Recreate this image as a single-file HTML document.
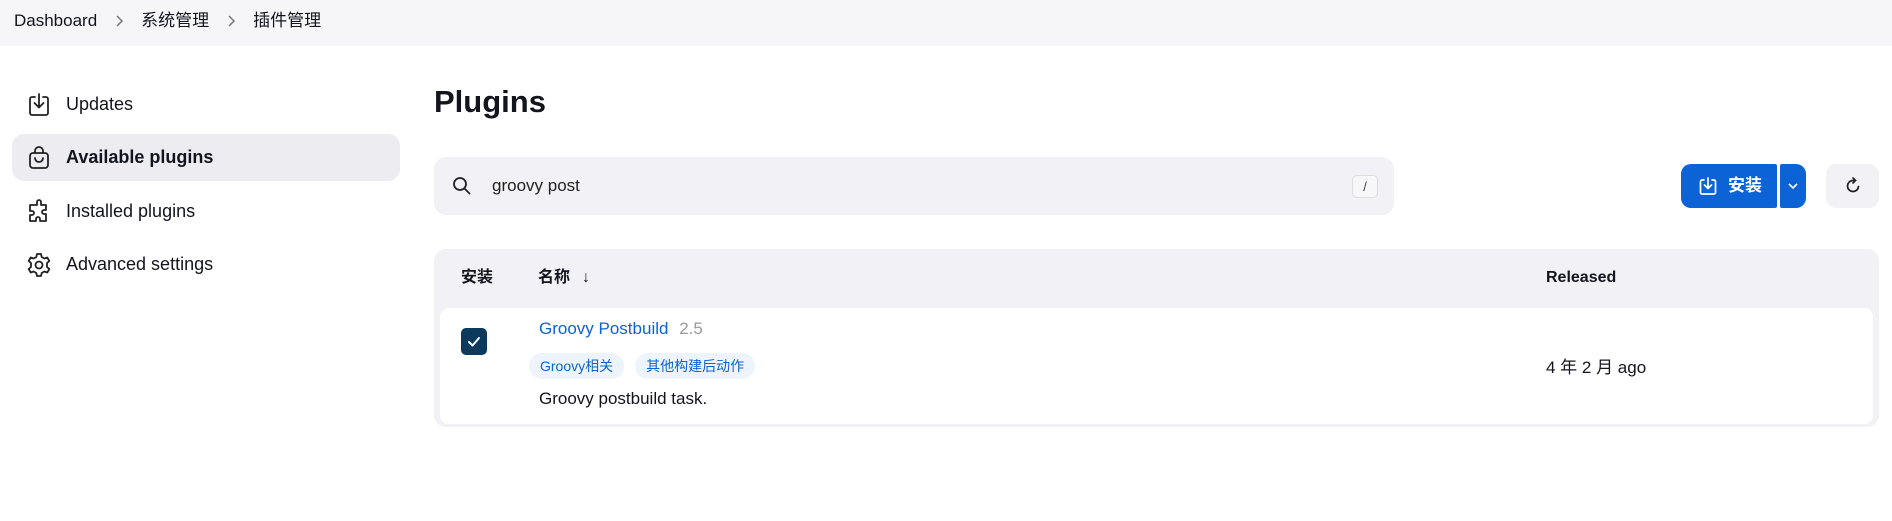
<!DOCTYPE html>
<html><head><meta charset="utf-8"><style>
*{box-sizing:border-box;margin:0;padding:0}
body{width:1892px;height:521px;background:#fff;font-family:"Liberation Sans","Noto Sans CJK SC",sans-serif;color:#14141f;position:relative;overflow:hidden;font-size:17px}
.hdr{position:absolute;left:0;top:0;width:1892px;height:46px;background:#f6f6f8}
.bc{position:absolute;top:9px;left:14px;font-size:17px;line-height:24px;display:flex;align-items:center}
.bc svg{margin:0 17px}
.side{position:absolute;left:12px;width:388px;height:47px;display:flex;align-items:center;font-size:18px}
.side svg{position:absolute;left:15px}
.side span{position:absolute;left:54px}
.act{background:#ececf1;border-radius:12px;font-weight:bold}
h1{position:absolute;left:434px;top:84px;font-size:31px;font-weight:bold}
.search{position:absolute;left:434px;top:157px;width:960px;height:58px;background:#f2f2f6;border-radius:12px}
.kbd{position:absolute;left:918px;top:18px;width:26px;height:23px;border:1px solid #ddd;border-radius:5px;background:#f7f7f9;font-size:13px;text-align:center;line-height:21px;color:#444}
.btn{position:absolute;top:164px;height:44px;background:#0b63d6;color:#fff;font-weight:bold}
.tbl{position:absolute;left:434px;top:249px;width:1445px;height:178px;background:#f2f2f6;border-radius:12px}
.card{position:absolute;left:6px;top:59px;width:1433px;height:116px;background:#fff;border-radius:9px}
.th{position:absolute;top:268px;font-size:16px;font-weight:bold;line-height:20px;height:20px}
.tag{display:inline-block;background:#eef4fb;color:#0b63d6;font-size:14px;padding:0 11px;height:26px;line-height:26px;border-radius:13px;margin-right:11px}
</style></head><body>
<div class="hdr"></div>
<div class="bc"><span>Dashboard</span><svg width="10" height="14" viewBox="0 0 10 14" fill="none" stroke="#777" stroke-width="1.5"><path d="M3 2l5 5-5 5"/></svg><span>系统管理</span><svg width="10" height="14" viewBox="0 0 10 14" fill="none" stroke="#777" stroke-width="1.5"><path d="M3 2l5 5-5 5"/></svg><span>插件管理</span></div>

<div class="side" style="top:81px"><svg width="24" height="26" viewBox="0 0 24 26" fill="none" stroke="#222" stroke-width="1.8" stroke-linecap="round" stroke-linejoin="round"><path d="M8 5H5a2 2 0 0 0-2 2v14a2 2 0 0 0 2 2h14a2 2 0 0 0 2-2V7a2 2 0 0 0-2-2h-3"/><path d="M12 2v13M7.5 11l4.5 4.5 4.5-4.5"/></svg><span>Updates</span></div>
<div class="side act" style="top:134px"><svg width="24" height="26" viewBox="0 0 24 26" fill="none" stroke="#222" stroke-width="1.8" stroke-linecap="round" stroke-linejoin="round"><rect x="3" y="8" width="18" height="15" rx="3"/><path d="M8 8V6a4 4 0 0 1 8 0v2M8 13a4 4 0 0 0 8 0"/></svg><span>Available plugins</span></div>
<div class="side" style="top:188px"><svg width="24" height="26" viewBox="0 0 24 26" fill="none" stroke="#222" stroke-width="1.8" stroke-linejoin="round"><path d="M10 3a2 2 0 0 1 4 0v3h5v5h-2a2 2 0 0 0 0 4h2v7h-6v-2a2 2 0 0 0-4 0v2H3v-6h2a2 2 0 0 0 0-4H3V6h7z"/></svg><span>Installed plugins</span></div>
<div class="side" style="top:241px"><svg width="24" height="26" viewBox="0 0 24 26" fill="none" stroke="#222" stroke-width="1.8" stroke-linejoin="round"><path d="M10 2h4l.7 3 2.6 1.5 3-1 2 3.5-2.3 2.1v3.8l2.3 2.1-2 3.5-3-1L14.7 21l-.7 3h-4l-.7-3-2.6-1.5-3 1-2-3.5 2.3-2.1v-3.8L1.7 9l2-3.5 3 1L9.3 5z"/><circle cx="12" cy="13" r="3.5"/></svg><span>Advanced settings</span></div>

<h1>Plugins</h1>
<div class="search">
<svg style="position:absolute;left:18px;top:19px" width="20" height="20" viewBox="0 0 20 20" fill="none" stroke="#222" stroke-width="1.8" stroke-linecap="round"><circle cx="8" cy="8" r="6"/><path d="M12.5 12.5l5 5"/></svg>
<span style="position:absolute;left:58px;top:19px;font-size:17px;color:#222">groovy post</span>
<div class="kbd">/</div></div>

<div class="btn" style="left:1681px;width:96px;border-radius:10px 2px 2px 10px">
<svg style="position:absolute;left:17px;top:12px" width="20" height="20" viewBox="0 0 20 20" fill="none" stroke="#fff" stroke-width="1.7" stroke-linecap="round" stroke-linejoin="round"><path d="M6 4H4a1.5 1.5 0 0 0-1.5 1.5v11A1.5 1.5 0 0 0 4 18h12a1.5 1.5 0 0 0 1.5-1.5v-11A1.5 1.5 0 0 0 16 4h-2"/><path d="M10 2v10M6.5 9l3.5 3.5L13.5 9"/></svg>
<span style="position:absolute;left:47px;top:11px;font-size:17px;line-height:22px">安装</span></div>
<div class="btn" style="left:1780px;width:26px;border-radius:2px 10px 10px 2px">
<svg style="position:absolute;left:7px;top:18px" width="12" height="8" viewBox="0 0 12 8" fill="none" stroke="#fff" stroke-width="1.6"><path d="M2 2l4 4 4-4"/></svg></div>
<div style="position:absolute;left:1826px;top:164px;width:53px;height:44px;background:#f2f2f6;border-radius:10px">
<svg style="position:absolute;left:17px;top:12px" width="20" height="20" viewBox="0 0 20 20" fill="none" stroke="#222" stroke-width="1.7" stroke-linecap="round"><path d="M15.5 10.5A5.5 5.5 0 1 1 10 4.5h2"/><path d="M10 2l2.5 2.5L10 7"/></svg></div>

<div class="tbl"><div class="card"></div></div>
<div class="th" style="left:461px">安装</div>
<div class="th" style="left:538px">名称<span style="font-weight:normal;margin-left:12px">↓</span></div>
<div class="th" style="left:1546px">Released</div>

<div style="position:absolute;left:461px;top:328px;width:26px;height:27px;background:#0b3a5c;border-radius:5px">
<svg style="position:absolute;left:5px;top:6px" width="16" height="15" viewBox="0 0 16 15" fill="none" stroke="#fff" stroke-width="2" stroke-linecap="round" stroke-linejoin="round"><path d="M3 8l3.5 3.5L13 4"/></svg></div>
<div style="position:absolute;left:539px;top:319px;font-size:17px;color:#0b63d6">Groovy Postbuild <span style="color:#999;margin-left:6px">2.5</span></div>
<div style="position:absolute;left:529px;top:353px"><span class="tag">Groovy相关</span><span class="tag">其他构建后动作</span></div>
<div style="position:absolute;left:539px;top:389px;font-size:17px">Groovy postbuild task.</div>
<div style="position:absolute;left:1546px;top:353px;font-size:17px">4 年 2 月 ago</div>
</body></html>
